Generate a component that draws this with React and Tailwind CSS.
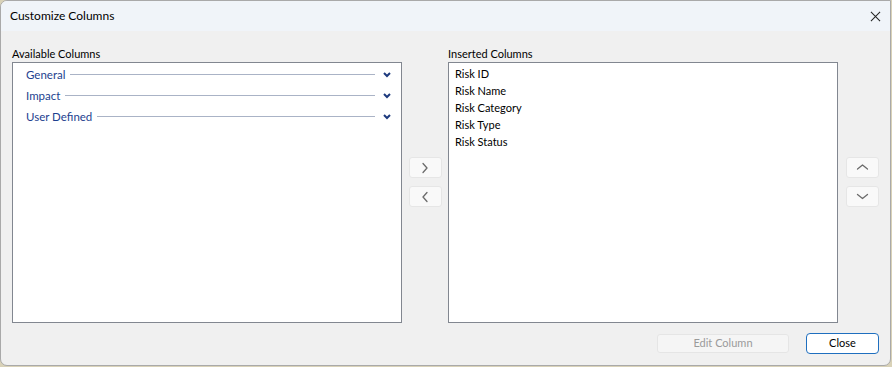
import React from 'react';

const font = { fontFamily: 'Lato, "Segoe UI", "Noto Sans", sans-serif' };

const Chevron = ({ dir = 'right', className = '' }) => {
  const paths = {
    right: 'M3 1 L7 5.5 L3 10',
    left: 'M7 1 L3 5.5 L7 10',
    up: 'M1 7 L6 3 L11 7',
    down: 'M1 3.5 L6 7.5 L11 3.5',
  };
  const vb = dir === 'up' || dir === 'down' ? '0 0 12 11' : '0 0 10 11';
  return (
    <svg viewBox={vb} className={className} fill="none" stroke="currentColor" strokeWidth="1.3" strokeLinecap="round" strokeLinejoin="round">
      <path d={paths[dir]} />
    </svg>
  );
};

const SmallButton = ({ dir }) => (
  <button className="w-[33px] h-[21px] flex items-center justify-center bg-[#f9f9f9] border border-[#e6e6e6] rounded-[3px] text-[#6b6b6b]">
    <Chevron dir={dir} className={dir === 'up' || dir === 'down' ? 'w-[13px] h-[11px]' : 'w-[10px] h-[12px]'} />
  </button>
);

const GroupRow = ({ label }) => (
  <div className="flex items-center h-[21px] pl-[13px] pr-[10px]">
    <span className="text-[11.5px] text-[#1d3f8f] leading-none">{label}</span>
    <div className="flex-1 h-px bg-[#aab3c6] ml-[5px] mr-[8px]" />
    <svg viewBox="0 0 8 6" className="w-[8px] h-[6px] text-[#1d3a7e]" fill="none" stroke="currentColor" strokeWidth="2" strokeLinejoin="miter">
      <path d="M1 1 L4 4 L7 1" />
    </svg>
  </div>
);

export default function App() {
  const groups = ['General', 'Impact', 'User Defined'];
  const inserted = ['Risk ID', 'Risk Name', 'Risk Category', 'Risk Type', 'Risk Status'];

  return (
    <div className="w-[892px] h-[367px] bg-[#d9d2b8] overflow-hidden" style={font}>
      <div className="w-[891px] h-[366px] bg-[#f0f0f0] border border-[#a9a9a9] rounded-tl-[7px] rounded-bl-[7px] rounded-br-[7px] flex flex-col overflow-hidden">
        {/* Title bar */}
        <div className="h-[30px] bg-[#f0f4f9] flex items-center justify-between pl-[9px] pr-[9px] shrink-0">
          <span className="text-[12px] text-black">Customize Columns</span>
          <svg viewBox="0 0 12 12" className="w-[11px] h-[11px] text-[#222]" fill="none" stroke="currentColor" strokeWidth="1.1">
            <path d="M1 1 L11 11 M11 1 L1 11" />
          </svg>
        </div>

        {/* Body */}
        <div className="flex pl-[11px] pt-[14px]">
          <div className="flex flex-col">
            <div className="h-[17px] text-[11px] leading-[17px] text-black">Available Columns</div>
            <div className="w-[390px] h-[261px] bg-white border border-[#828790] pt-[1px]">
              {groups.map((g) => (
                <GroupRow key={g} label={g} />
              ))}
            </div>
          </div>

          <div className="w-[46px] flex flex-col items-center pt-[112px] gap-[8px]">
            <SmallButton dir="right" />
            <SmallButton dir="left" />
          </div>

          <div className="flex flex-col">
            <div className="h-[17px] text-[11px] leading-[17px] text-black">Inserted Columns</div>
            <div className="w-[390px] h-[261px] bg-white border border-[#828790] pt-[2px] pl-[6px]">
              {inserted.map((r) => (
                <div key={r} className="h-[17px] leading-[17px] text-[11px] text-black">{r}</div>
              ))}
            </div>
          </div>

          <div className="w-[48px] flex flex-col items-center pt-[112px] gap-[8px]">
            <SmallButton dir="up" />
            <SmallButton dir="down" />
          </div>
        </div>

        {/* Footer */}
        <div className="flex items-center justify-end pr-[11px] pt-[10px] gap-[17px]">
          <button className="w-[132px] h-[19px] bg-[#f5f5f5] border border-[#e5e5e5] rounded-[3px] text-[11px] text-[#9a9a9a]">
            Edit Column
          </button>
          <button className="w-[73px] h-[21px] bg-white border border-[#1f6fbf] rounded-[4px] text-[11px] text-black">
            Close
          </button>
        </div>
      </div>
    </div>
  );
}
